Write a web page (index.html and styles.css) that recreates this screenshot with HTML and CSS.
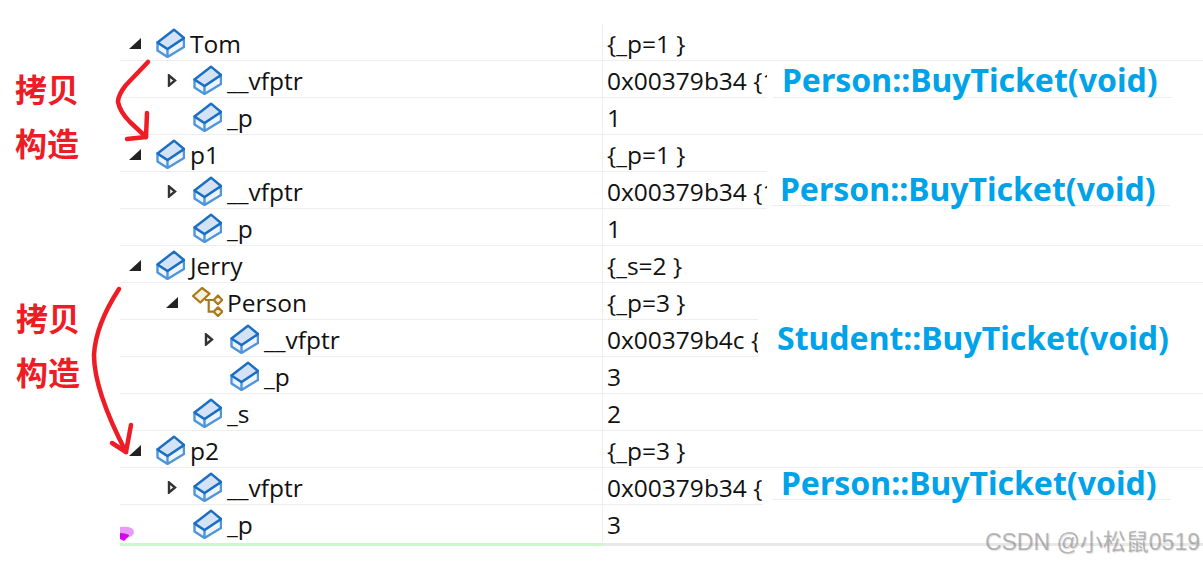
FILE: index.html
```html
<!DOCTYPE html>
<html lang="zh">
<head>
    <meta charset="UTF-8">
    <meta name="viewport" content="width=device-width, initial-scale=1.0">
    <title>Watch</title>
    <link rel="stylesheet" href="styles.css">
</head>
<body>
    <svg class="defs" width="0" height="0">
        <symbol id="box" viewBox="0 0 29 30">
            <path d="M1.5 22.5V14.5L11.5 21V29ZM11.5 21L28 10V19L11.5 29Z" fill="#eef4fb" stroke="#4f95da" stroke-width="2.4" stroke-linejoin="round"/>
            <path d="M1.5 14.5L18 1.7L28 10L11.5 21Z" fill="#d3e2f5" stroke="#1a6ec4" stroke-width="2.4" stroke-linejoin="round"/>
        </symbol>
        <symbol id="base" viewBox="0 0 31 30">
            <path d="M13 13H16.7V24.7H21.5M16.7 13H21.5" fill="none" stroke="#a8781a" stroke-width="2.2"/>
            <path d="M1 9L10 1L17.5 6.7L8.3 15.5Z M21.7 13L26 8.5L30.3 13L26 17.3Z M21.7 24.7L26 20.4L30.3 24.7L26 29Z" fill="#f7f0dc" stroke="#a8781a" stroke-width="2.2" stroke-linejoin="round"/>
        </symbol>
        <symbol id="open" viewBox="0 0 12 11">
            <path d="M12 0V11H0Z" fill="#222"/>
        </symbol>
        <symbol id="closed" viewBox="0 0 9 13">
            <path d="M1.5 1.5L7.5 6.5L1.5 11.5Z" fill="#fff" stroke="#333" stroke-width="2.4"/>
        </symbol>
    </svg>

    <div class="watch">
        <div class="row lvl0"><span class="name"><svg class="tri"><use href="#open"/></svg><svg class="ico"><use href="#box"/></svg><span class="lbl">Tom</span></span><span class="val">{_p=1 }</span></div>
        <div class="row lvl1"><span class="name"><svg class="tri shut"><use href="#closed"/></svg><svg class="ico"><use href="#box"/></svg><span class="lbl">__vfptr</span></span><span class="val">0x00379b34 {1</span></div>
        <div class="row lvl1"><span class="name"><i class="tri"></i><svg class="ico"><use href="#box"/></svg><span class="lbl">_p</span></span><span class="val">1</span></div>
        <div class="row lvl0"><span class="name"><svg class="tri"><use href="#open"/></svg><svg class="ico"><use href="#box"/></svg><span class="lbl">p1</span></span><span class="val">{_p=1 }</span></div>
        <div class="row lvl1"><span class="name"><svg class="tri shut"><use href="#closed"/></svg><svg class="ico"><use href="#box"/></svg><span class="lbl">__vfptr</span></span><span class="val">0x00379b34 {1</span></div>
        <div class="row lvl1"><span class="name"><i class="tri"></i><svg class="ico"><use href="#box"/></svg><span class="lbl">_p</span></span><span class="val">1</span></div>
        <div class="row lvl0"><span class="name"><svg class="tri"><use href="#open"/></svg><svg class="ico"><use href="#box"/></svg><span class="lbl">Jerry</span></span><span class="val">{_s=2 }</span></div>
        <div class="row lvl1"><span class="name"><svg class="tri"><use href="#open"/></svg><svg class="ico base"><use href="#base"/></svg><span class="lbl">Person</span></span><span class="val">{_p=3 }</span></div>
        <div class="row lvl2"><span class="name"><svg class="tri shut"><use href="#closed"/></svg><svg class="ico"><use href="#box"/></svg><span class="lbl">__vfptr</span></span><span class="val">0x00379b4c {</span></div>
        <div class="row lvl2"><span class="name"><i class="tri"></i><svg class="ico"><use href="#box"/></svg><span class="lbl">_p</span></span><span class="val">3</span></div>
        <div class="row lvl1"><span class="name"><i class="tri"></i><svg class="ico"><use href="#box"/></svg><span class="lbl">_s</span></span><span class="val">2</span></div>
        <div class="row lvl0"><span class="name"><svg class="tri"><use href="#open"/></svg><svg class="ico"><use href="#box"/></svg><span class="lbl">p2</span></span><span class="val">{_p=3 }</span></div>
        <div class="row lvl1"><span class="name"><svg class="tri shut"><use href="#closed"/></svg><svg class="ico"><use href="#box"/></svg><span class="lbl">__vfptr</span></span><span class="val">0x00379b34 {</span></div>
        <div class="row lvl1 last"><span class="name"><i class="tri"></i><svg class="ico"><use href="#box"/></svg><span class="lbl">_p</span></span><span class="val">3</span></div>
    </div>

    <div class="note n1"><div class="txt">Person::BuyTicket(void)</div></div>
    <div class="note n2"><div class="txt">Person::BuyTicket(void)</div></div>
    <div class="note n3"><div class="txt">Student::BuyTicket(void)</div></div>
    <div class="note n4"><div class="txt">Person::BuyTicket(void)</div></div>

    <div class="mark m1">拷贝<br>构造</div>
    <div class="mark m2">拷贝<br>构造</div>

    <svg class="ink" width="1203" height="561">
        <g fill="none" stroke="#ee1c25" stroke-width="4.5" stroke-linecap="round" stroke-linejoin="round">
            <path d="M148 62L126 85Q118 95 118 102Q120 112 130 122L146 137"/>
            <path d="M147 113L146 137L127 139"/>
            <path d="M119 289C104 312 95 335 94 355C94 385 112 425 126 452"/>
            <path d="M131 425L126 452L112 443"/>
        </g>
        <path d="M120 527Q134 526 134 532Q134 537 125 538L120 538Z" fill="#e69cf7"/>
        <path d="M120 533Q130 534 129 536L124 541L120 539Z" fill="#d800f0"/>
    </svg>

    <div class="wm">CSDN @小松鼠0519</div>
</body>
</html>
```
FILE: styles.css
```css
html, body {
    margin: 0;
    height: 561px;
    overflow: hidden;
    background: #fff;
}
body {
    position: relative;
    font-family: "Open Sans", "Noto Sans CJK SC", sans-serif;
    color: #111;
}
.defs {
    position: absolute;
}
.watch {
    margin-left: 120px;
    padding-top: 24px;
}
.row {
    display: grid;
    grid-template-columns: 483px 1fr;
    height: 37px;
    box-sizing: border-box;
    border-bottom: 1px solid #eeeeee;
    font-size: 24.5px;
    line-height: 36px;
    white-space: nowrap;
}
.row.last {
    border-bottom: none;
    height: 39px;
}
.last .name {
    border-bottom: 3px solid #ccf7cc;
}
.last .val {
    border-bottom: 3px solid #e8e8e8;
}
.name {
    display: flex;
    align-items: center;
    border-right: 1px solid #eeeeee;
}
.lbl {
    padding-top: 2px;
}
.val {
    padding: 2px 0 0 4px;
    overflow: hidden;
}
.lvl0 .name { padding-left: 9px; }
.lvl1 .name { padding-left: 46px; }
.lvl2 .name { padding-left: 83px; }
.tri {
    width: 12px;
    height: 11px;
    margin-right: 15px;
    flex: none;
}
.tri.shut {
    height: 13px;
}
.ico {
    width: 29px;
    height: 30px;
    margin-right: 5px;
    flex: none;
}
.ico.base {
    width: 31px;
    margin: 0 4px 0 -1px;
}
.note {
    position: absolute;
    right: 0;
    background: #fff;
}
.txt {
    box-sizing: border-box;
    width: 399px;
    padding-left: 9px;
    color: #00a2e8;
    font-family: "Noto Sans", "Open Sans", sans-serif;
    font-weight: 700;
    font-size: 32px;
    white-space: nowrap;
    border-bottom: 1px solid #eeeeee;
}
.n1 { left: 767px; top: 61px; height: 37px; }
.n1 .txt { margin-left: 6px; height: 37px; line-height: 37px; }
.n2 { left: 767px; top: 171px; height: 38px; }
.n2 .txt { margin-left: 4px; height: 35px; line-height: 35px; }
.n3 { left: 758px; top: 319px; height: 38px; }
.n3 .txt { width: auto; padding-left: 19px; height: 38px; line-height: 38px; border-bottom: none; }
.n4 { left: 763px; top: 468px; height: 37px; }
.n4 .txt { margin-left: 9px; height: 32px; line-height: 30px; }
.mark {
    position: absolute;
    left: 15px;
    color: #ee1c25;
    font-family: "Noto Sans CJK SC", sans-serif;
    font-weight: 700;
    font-size: 32px;
    line-height: 54px;
}
.m1 { top: 61px; }
.m2 { top: 290px; left: 16px; }
.ink {
    position: absolute;
    left: 0;
    top: 0;
    pointer-events: none;
}
.wm {
    position: absolute;
    right: 3px;
    top: 527px;
    color: rgba(130, 130, 130, 0.55);
    font-family: "Liberation Sans", "Noto Sans CJK SC", sans-serif;
    font-size: 23px;
    line-height: 30px;
    white-space: nowrap;
    text-shadow: 1px 1px 1px rgba(0, 0, 0, 0.12);
}
```
